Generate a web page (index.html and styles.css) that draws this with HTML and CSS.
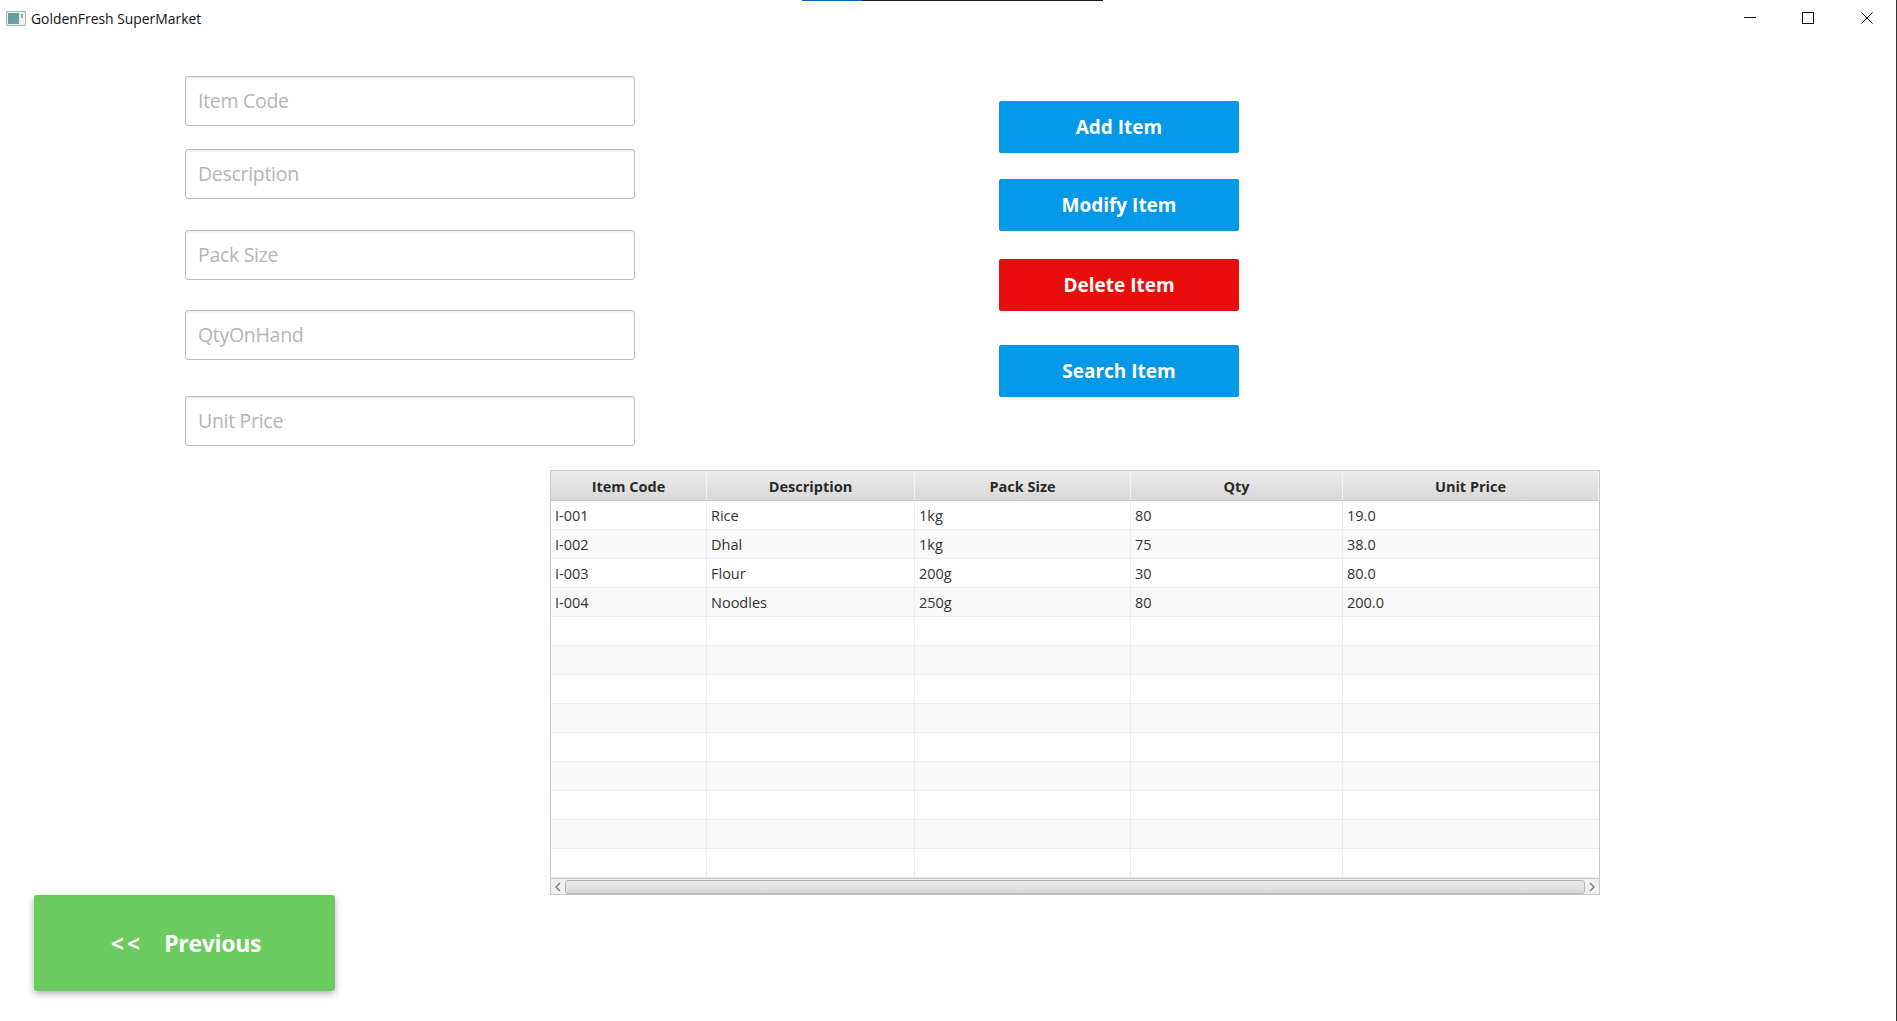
FILE: index.html
```html
<!DOCTYPE html>
<html lang="en">
<head>
<meta charset="utf-8">
<title>GoldenFresh SuperMarket</title>
<link rel="stylesheet" href="styles.css">
</head>
<body>
<div class="window">
  <div class="accent"><span class="accent-blue"></span><span class="accent-dark"></span></div>
  <header class="titlebar">
    <svg class="app-icon" width="20" height="15" viewBox="0 0 20 15">
      <defs><linearGradient id="ic" x1="0" y1="0" x2="1" y2="1"><stop offset="0" stop-color="#6f92ad"/><stop offset="1" stop-color="#5fae8c"/></linearGradient></defs>
      <rect x="0.5" y="0.5" width="19" height="14" fill="#eef0f4" stroke="#b4b8be"/>
      <rect x="2" y="2" width="11" height="11" fill="url(#ic)"/>
      <rect x="15" y="3" width="2" height="4" fill="#8fb0a8"/>
    </svg>
    <span class="app-title">GoldenFresh SuperMarket</span>
    <div class="win-controls">
      <svg width="12" height="12" viewBox="0 0 12 12"><path d="M0 5.5H12" stroke="#111" fill="none"/></svg>
      <svg width="12" height="12" viewBox="0 0 12 12"><rect x="0.5" y="0.5" width="11" height="11" stroke="#111" fill="none"/></svg>
      <svg class="close" width="12" height="12" viewBox="0 0 12 12"><path d="M0.5 0.5L11.5 11.5M11.5 0.5L0.5 11.5" stroke="#111" fill="none"/></svg>
    </div>
  </header>

  <section class="top">
    <div class="form">
      <div class="field f1">Item Code</div>
      <div class="field f2">Description</div>
      <div class="field f3">Pack Size</div>
      <div class="field f4">QtyOnHand</div>
      <div class="field f5">Unit Price</div>
    </div>
    <div class="actions">
      <button class="btn blue">Add Item</button>
      <button class="btn blue b2">Modify Item</button>
      <button class="btn red b3">Delete Item</button>
      <button class="btn blue b4">Search Item</button>
    </div>
  </section>

  <section class="table">
    <div class="row head">
      <div class="c c1">Item Code</div><div class="c c2">Description</div><div class="c c3">Pack Size</div><div class="c c4">Qty</div><div class="c c5">Unit Price</div>
    </div>
    <div class="row"><div class="c c1">I-001</div><div class="c c2">Rice</div><div class="c c3">1kg</div><div class="c c4">80</div><div class="c c5">19.0</div></div>
    <div class="row"><div class="c c1">I-002</div><div class="c c2">Dhal</div><div class="c c3">1kg</div><div class="c c4">75</div><div class="c c5">38.0</div></div>
    <div class="row"><div class="c c1">I-003</div><div class="c c2">Flour</div><div class="c c3">200g</div><div class="c c4">30</div><div class="c c5">80.0</div></div>
    <div class="row"><div class="c c1">I-004</div><div class="c c2">Noodles</div><div class="c c3">250g</div><div class="c c4">80</div><div class="c c5">200.0</div></div>
    <div class="row"><div class="c c1"></div><div class="c c2"></div><div class="c c3"></div><div class="c c4"></div><div class="c c5"></div></div>
    <div class="row"><div class="c c1"></div><div class="c c2"></div><div class="c c3"></div><div class="c c4"></div><div class="c c5"></div></div>
    <div class="row"><div class="c c1"></div><div class="c c2"></div><div class="c c3"></div><div class="c c4"></div><div class="c c5"></div></div>
    <div class="row"><div class="c c1"></div><div class="c c2"></div><div class="c c3"></div><div class="c c4"></div><div class="c c5"></div></div>
    <div class="row"><div class="c c1"></div><div class="c c2"></div><div class="c c3"></div><div class="c c4"></div><div class="c c5"></div></div>
    <div class="row"><div class="c c1"></div><div class="c c2"></div><div class="c c3"></div><div class="c c4"></div><div class="c c5"></div></div>
    <div class="row"><div class="c c1"></div><div class="c c2"></div><div class="c c3"></div><div class="c c4"></div><div class="c c5"></div></div>
    <div class="row"><div class="c c1"></div><div class="c c2"></div><div class="c c3"></div><div class="c c4"></div><div class="c c5"></div></div>
    <div class="row"><div class="c c1"></div><div class="c c2"></div><div class="c c3"></div><div class="c c4"></div><div class="c c5"></div></div>
    <div class="scrollbar">
      <svg width="8" height="10" viewBox="0 0 8 10"><path d="M6 1L2 5L6 9" stroke="#777" stroke-width="1.3" fill="none"/></svg>
      <div class="thumb"></div>
      <svg width="8" height="10" viewBox="0 0 8 10"><path d="M2 1L6 5L2 9" stroke="#777" stroke-width="1.3" fill="none"/></svg>
    </div>
  </section>

  <button class="prev"><span class="prev-arrows">&lt;&lt;</span><span>Previous</span></button>
</div>
</body>
</html>
```
FILE: styles.css
```css
* { box-sizing: border-box; }
html, body { margin: 0; padding: 0; background: #fff; overflow: hidden; }
body { font-family: "Open Sans", "Noto Sans", sans-serif; }
.window {
  width: 1897px; height: 1021px; background: #fff; position: relative;
  border-right: 1px solid #333;
}
.accent { position: absolute; top: 0; left: 802px; display: flex; height: 1px; }
.accent-blue { width: 60px; background: #0067c0; }
.accent-dark { width: 241px; background: #1c1c1c; }

.titlebar { height: 36px; display: flex; align-items: center; padding: 0 23px 0 6px; }
.app-icon { flex: none; margin-right: 5px; }
.app-title { font-size: 13.9px; color: #111; }
.win-controls { margin-left: auto; display: flex; gap: 46px; }
.win-controls svg { display: block; }
.win-controls .close { margin-left: 1px; }

.top { display: flex; height: 410px; padding: 40px 0 0 185px; }
.form { width: 450px; display: flex; flex-direction: column; }
.field {
  height: 50px; background: #fff; border: 1px solid #bdbdbd; border-radius: 3px;
  box-shadow: inset 0 2px 2px -1px #e6e6e6;
  padding: 0 12px 2px; display: flex; align-items: center;
  font-size: 19.5px; letter-spacing: -0.3px; color: #b5b5b5;
}
.f2 { margin-top: 23px; }
.f3 { margin-top: 31px; }
.f4 { margin-top: 30px; }
.f5 { margin-top: 36px; }

.actions { margin-left: 364px; padding-top: 25px; display: flex; flex-direction: column; width: 240px; }
.btn {
  width: 240px; height: 52px; border: 0; border-radius: 2px; color: #fff;
  font: 700 19px "Open Sans", "Noto Sans", sans-serif; padding: 0;
}
.blue { background: #0398e8; }
.red { background: #ea0d0d; }
.b2 { margin-top: 26px; }
.b3 { margin-top: 28px; }
.b4 { margin-top: 34px; }

.table {
  margin: 24px 0 0 550px; width: 1050px; height: 425px;
  border: 1px solid #c8c8c8; display: flex; flex-direction: column;
  font-size: 14.5px; color: #333;
}
.row { display: flex; height: 29px; flex: none; background: #fff; border-bottom: 1px solid #ececec; }
.row:nth-child(odd) { background: #f9f9f9; }
.row.head {
  height: 30px; background: linear-gradient(#ececec, #d8d8d8);
  border-bottom: 1px solid #c8c8c8; font-weight: 700; color: #2a2a2a;
}
.c { height: 100%; border-right: 1px solid #ececec; padding-left: 4px; display: flex; align-items: center; }
.head .c { justify-content: center; padding: 2px 0 0; border-right: 1px solid #f4f4f4; }
.c1 { width: 156px; }
.c2 { width: 208px; }
.c3 { width: 216px; }
.c4 { width: 212px; }
.c5 { flex: 1; border-right: 0; }
.scrollbar {
  flex: 1; display: flex; align-items: center; gap: 3px; padding: 0 3px;
  background: #f0f0f0; border-top: 1px solid #c8c8c8;
}
.scrollbar svg { flex: none; display: block; }
.thumb {
  flex: 1; height: 14px; border: 1px solid #b4b4b4; border-radius: 3px;
  background: linear-gradient(#ececec, #d9d9d9);
}

.prev {
  display: flex; align-items: center; justify-content: center; gap: 21px;
  width: 301px; height: 96px; margin: 0 0 0 34px; border: 0; border-radius: 3px;
  background: #6bcb5f; color: #fff; padding: 0 0 0 3px;
  font: 700 23px "Open Sans", "Noto Sans", sans-serif; letter-spacing: -0.3px;
  box-shadow: 0 3px 7px rgba(0,0,0,.3);
}
.prev-arrows { letter-spacing: 3px; }
```
